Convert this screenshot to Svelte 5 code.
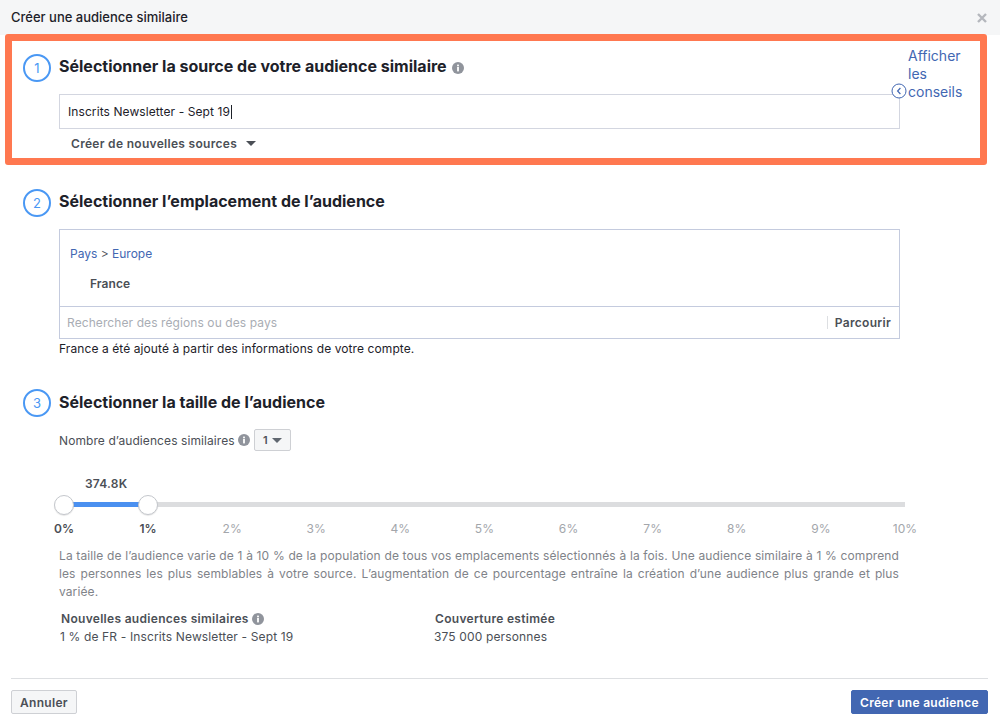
<script>
  const ticks = [0, 1, 2, 3, 4, 5, 6, 7, 8, 9, 10];
  const selected = 1;
</script>

<div class="dialog">
  <header class="top">
    <span class="title">Créer une audience similaire</span>
    <svg class="close" viewBox="0 0 10 10" width="10" height="10"><path d="M1 1l8 8M9 1l-8 8" stroke="#b4b7bd" stroke-width="2.4" fill="none" /></svg>
  </header>

  <section class="step source">
    <div class="step-head">
      <span class="num">1</span>
      <h2>Sélectionner la source de votre audience similaire</h2>
      <svg class="info" viewBox="0 0 12 12" width="12" height="12"><circle cx="6" cy="6" r="6" fill="#90949c" /><rect x="5.1" y="5" width="1.8" height="4.4" fill="#fff" /><rect x="5.1" y="2.6" width="1.8" height="1.7" fill="#fff" /></svg>
    </div>
    <div class="field"><span>Inscrits Newsletter - Sept 19</span><i class="cursor"></i></div>
    <div class="new-src">Créer de nouvelles sources <b class="caret"></b></div>

    <a class="tips">Afficher les conseils</a>
    <svg class="tips-icon" viewBox="0 0 16 16" width="16" height="16"><circle cx="8" cy="8" r="7" fill="#fff" stroke="#4267b2" stroke-width="1" /><path d="M9.4 5L6.6 8l2.8 3" fill="none" stroke="#4267b2" stroke-width="1.2" /></svg>
  </section>

  <section class="step place">
    <div class="step-head">
      <span class="num">2</span>
      <h2>Sélectionner l’emplacement de l’audience</h2>
    </div>
    <div class="picker">
      <div class="crumbs"><a>Pays</a> &gt; <a>Europe</a></div>
      <div class="country">France</div>
      <div class="search">
        <span class="ph">Rechercher des régions ou des pays</span>
        <span class="browse">Parcourir</span>
      </div>
    </div>
    <p class="hint">France a été ajouté à partir des informations de votre compte.</p>
  </section>

  <section class="step size">
    <div class="step-head">
      <span class="num">3</span>
      <h2>Sélectionner la taille de l’audience</h2>
    </div>
    <div class="count">
      <span>Nombre d’audiences similaires</span>
      <svg class="info" viewBox="0 0 12 12" width="12" height="12"><circle cx="6" cy="6" r="6" fill="#90949c" /><rect x="5.1" y="5" width="1.8" height="4.4" fill="#fff" /><rect x="5.1" y="2.6" width="1.8" height="1.7" fill="#fff" /></svg>
      <span class="select">1 <b class="caret small"></b></span>
    </div>

    <div class="reach">374.8K</div>
    <div class="slider">
      <div class="fill" style="width:{selected * 10}%"></div>
      <span class="knob" style="left:0%"></span>
      <span class="knob" style="left:{selected * 10}%"></span>
    </div>
    <div class="ticks">
      {#each ticks as t}
        <span class="tick" class:on={t <= selected}><em>{t}%</em></span>
      {/each}
    </div>

    <p class="desc">La taille de l’audience varie de 1 à 10 % de la population de tous vos emplacements sélectionnés à la fois. Une audience similaire à 1 % comprend les personnes les plus semblables à votre source. L’augmentation de ce pourcentage entraîne la création d’une audience plus grande et plus variée.</p>

    <div class="summary">
      <div class="col">
        <div class="lbl">Nouvelles audiences similaires
          <svg class="info" viewBox="0 0 12 12" width="12" height="12"><circle cx="6" cy="6" r="6" fill="#90949c" /><rect x="5.1" y="5" width="1.8" height="4.4" fill="#fff" /><rect x="5.1" y="2.6" width="1.8" height="1.7" fill="#fff" /></svg>
        </div>
        <div class="val">1 % de FR - Inscrits Newsletter - Sept 19</div>
      </div>
      <div class="col">
        <div class="lbl">Couverture estimée</div>
        <div class="val">375 000 personnes</div>
      </div>
    </div>
  </section>

  <footer class="bottom">
    <button class="btn">Annuler</button>
    <button class="btn primary">Créer une audience</button>
  </footer>
</div>

<style>
  :global(body) {
    margin: 0;
    background: #fff;
  }

  .dialog {
    width: 1000px;
    height: 726px;
    overflow: hidden;
    font-family: Inter, "Liberation Sans", sans-serif;
    font-size: 12px;
    letter-spacing: 0.09px;
    color: #4b4f56;
  }

  .top {
    height: 35px;
    box-sizing: border-box;
    padding: 0 13px 2px 11px;
    background: #f5f6f7;
    display: flex;
    align-items: center;
    justify-content: space-between;
  }

  .title {
    font-size: 13px;
    font-weight: 500;
    letter-spacing: 0;
    color: #1d2129;
  }

  .close {
    margin-top: 3px;
  }

  /* step blocks */
  .step {
    position: relative;
    padding-left: 59px;
    width: 900px;
    box-sizing: border-box;
  }

  .step-head {
    display: flex;
    align-items: center;
    gap: 5px;
    height: 28px;
    position: relative;
  }

  h2 {
    margin: 0 0 4px;
    font-size: 16px;
    line-height: 20px;
    font-weight: 700;
    color: #1d2129;
    letter-spacing: 0;
  }

  .size h2 {
    margin-bottom: 2px;
  }

  .num {
    position: absolute;
    left: -36px;
    top: 0;
    width: 28px;
    height: 28px;
    box-sizing: border-box;
    border: 2.5px solid #4a98f4;
    border-radius: 50%;
    display: flex;
    align-items: center;
    justify-content: center;
    font-size: 13px;
    color: #4a98f4;
  }

  .info {
    flex: none;
    vertical-align: -2px;
  }

  /* source step, orange highlight */
  .source {
    margin: -1px 0 0 5px;
    width: 982px;
    height: 131px;
    padding: 13px 0 0 47px;
    border: 7.5px solid #ff7850;
    border-radius: 3px;
    background: #fff;
  }

  .field {
    margin-top: 12px;
    width: 841px;
    height: 35px;
    box-sizing: border-box;
    border: 1px solid #d3d6e0;
    padding-left: 8px;
    display: flex;
    align-items: center;
    color: #1d2129;
  }

  .cursor {
    display: inline-block;
    width: 1px;
    height: 14px;
    background: #1d2129;
    margin-left: 1px;
  }

  .new-src {
    margin: 7px 0 0 12px;
    font-weight: 600;
    letter-spacing: 0.3px;
    line-height: 16px;
  }

  .caret {
    display: inline-block;
    width: 0;
    height: 0;
    border: 5px solid transparent;
    border-top: 5px solid #4b4f56;
    border-bottom: 0;
    margin-left: 6px;
    vertical-align: 2px;
  }

  .caret.small {
    border-width: 5px 5px 0;
    border-top-color: #606770;
    margin-left: 2px;
    vertical-align: 1px;
  }

  .tips {
    position: absolute;
    left: 896px;
    top: 6px;
    width: 60px;
    font-size: 14px;
    line-height: 18px;
    letter-spacing: 0;
    color: #4267b2;
  }

  .tips-icon {
    position: absolute;
    left: 879px;
    top: 42px;
  }

  /* place step */
  .place {
    padding-top: 24px;
  }

  .picker {
    margin-top: 12px;
    width: 841px;
    height: 110px;
    box-sizing: border-box;
    border: 1px solid #c4cbde;
    display: flex;
    flex-direction: column;
  }

  .crumbs {
    margin: 16px 0 0 10px;
    line-height: 15px;
    letter-spacing: 0;
    color: #4b4f56;
  }

  .crumbs a {
    color: #4267b2;
  }

  .country {
    margin: 15px 0 0 30px;
    line-height: 15px;
    font-weight: 600;
  }

  .search {
    margin-top: auto;
    height: 32px;
    box-sizing: border-box;
    border-top: 1px solid #c4cbde;
    display: flex;
    align-items: center;
    justify-content: space-between;
    padding: 0 8px 0 7px;
  }

  .ph {
    color: #a9adb4;
  }

  .browse {
    font-weight: 600;
    border-left: 1px solid #dddfe2;
    padding-left: 7px;
    line-height: 13px;
    letter-spacing: 0.3px;
  }

  .hint {
    margin: 2px 0 0;
    line-height: 15px;
    color: #1d2129;
  }

  /* size step */
  .size {
    padding-top: 33px;
  }

  .count {
    margin-top: 12px;
    height: 22px;
    display: flex;
    align-items: center;
    gap: 3px;
  }

  .select {
    margin-left: 1px;
    width: 37px;
    height: 22px;
    box-sizing: border-box;
    border: 1px solid #ced0d4;
    border-radius: 2px;
    background: #f5f6f7;
    display: flex;
    align-items: center;
    justify-content: center;
    font-weight: 600;
    font-size: 11px;
    gap: 2px;
  }

  .reach {
    margin: 26px 0 0 26px;
    line-height: 14px;
    font-weight: 600;
    letter-spacing: 0.2px;
  }

  .slider {
    position: relative;
    margin: 11px 0 0 5px;
    width: 841px;
    height: 5px;
    background: #dcdddf;
  }

  .fill {
    height: 100%;
    background: #4a90f0;
  }

  .knob {
    position: absolute;
    top: -7.5px;
    width: 20px;
    height: 20px;
    margin-left: -10px;
    box-sizing: border-box;
    border: 1px solid #c4c7cc;
    border-radius: 50%;
    background: #fff;
    box-shadow: 0 1px 1px rgba(0, 0, 0, 0.1);
  }

  .ticks {
    margin: 15px 0 0 5px;
    width: 841px;
    display: flex;
    justify-content: space-between;
    line-height: 14px;
    color: #a3a6ab;
  }

  .tick {
    width: 0;
    display: flex;
    justify-content: center;
  }

  .tick em {
    font-style: normal;
  }

  .tick.on {
    color: #4b4f56;
    font-weight: 600;
  }

  .desc {
    margin: 11px 0 0;
    width: 840px;
    line-height: 18px;
    color: #7f8389;
    text-align: justify;
    letter-spacing: 0.1px;
  }

  .summary {
    margin-top: 9px;
    display: flex;
    padding-left: 2px;
  }

  .col {
    width: 374px;
    line-height: 18px;
  }

  .lbl {
    font-weight: 600;
    letter-spacing: 0.3px;
  }

  .val {
    margin-left: -1px;
    letter-spacing: 0.14px;
  }

  .bottom {
    margin: 32px 12px 0 11px;
    border-top: 1px solid #dddfe2;
    padding-top: 11px;
    display: flex;
    justify-content: space-between;
  }

  .btn {
    height: 24px;
    padding: 0 8px;
    border: 1px solid #ced0d4;
    border-radius: 2px;
    background: #f5f6f7;
    font: 600 12px Inter, "Liberation Sans", sans-serif;
    letter-spacing: 0.3px;
    color: #4b4f56;
  }

  .primary {
    width: 137px;
    background: #4267b2;
    border-color: #4267b2;
    color: #fff;
  }
</style>
